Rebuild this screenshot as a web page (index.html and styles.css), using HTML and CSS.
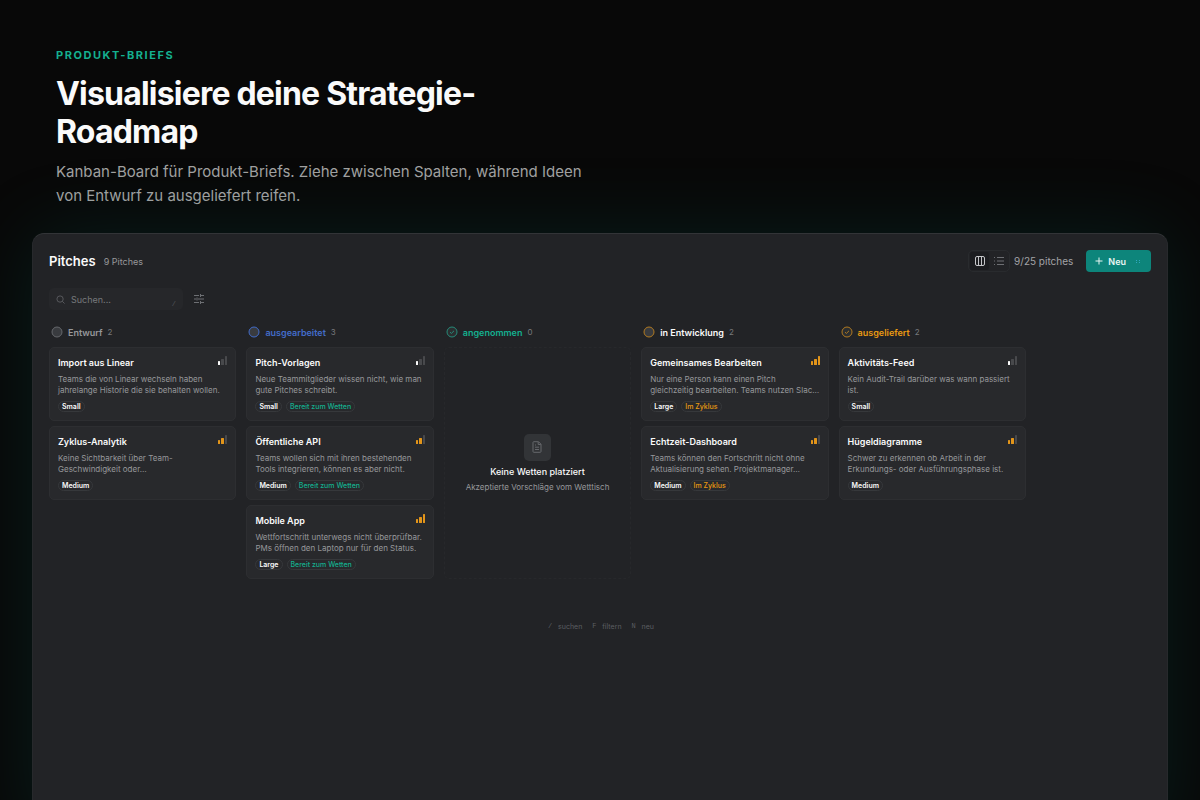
FILE: index.html
```
<!DOCTYPE html>
<html lang="de">
<head>
    <meta charset="UTF-8">
    <meta name="viewport" content="width=device-width, initial-scale=1.0">
    <title>Produkt-Briefs</title>
    <link rel="stylesheet" href="styles.css">
</head>
<body>
    <!-- Shared icons -->
    <svg class="sprite" aria-hidden="true">
        <symbol id="bars" viewBox="0 0 9 9">
            <rect class="bar-1" x="0" y="5" width="2" height="4" rx="0.5"/>
            <rect class="bar-2" x="3" y="3" width="3" height="6" rx="0.5"/>
            <rect class="bar-3" x="7" y="0" width="2" height="9" rx="0.5"/>
        </symbol>
        <symbol id="circle" viewBox="0 0 12 12">
            <circle cx="6" cy="6" r="5" fill="#393b3f" stroke="currentColor"/>
        </symbol>
        <symbol id="check" viewBox="0 0 12 12">
            <circle cx="6" cy="6" r="5" fill="#2b2e30" stroke="currentColor"/>
            <path d="M4 6.2l1.400 1.200L8 4.800" fill="none" stroke="currentColor"/>
        </symbol>
    </svg>

    <main class="page">
        <header class="intro">
            <p class="eyebrow">PRODUKT-BRIEFS</p>
            <h1>Visualisiere deine Strategie-Roadmap</h1>
            <p class="lead">Kanban-Board für Produkt-Briefs. Ziehe zwischen Spalten, während Ideen von Entwurf zu ausgeliefert reifen.</p>
        </header>

        <section class="panel">
            <div class="panel-header">
                <h2>Pitches</h2>
                <span class="total">9 Pitches</span>
                <div class="view-switch">
                    <button class="active" type="button" aria-label="Board">
                        <svg viewBox="0 0 10 10"><rect x="0.5" y="0.5" width="9" height="9" rx="1.5"/><path d="M3.5 0.5v9M6.5 0.5v9"/></svg>
                    </button>
                    <button type="button" aria-label="Liste">
                        <svg viewBox="0 0 10 10"><path d="M3 1.5h7M3 5h7M3 8.5h7M0 1.5h1M0 5h1M0 8.5h1"/></svg>
                    </button>
                </div>
                <span class="quota">9/25 pitches</span>
                <button class="new-button" type="button">
                    <svg viewBox="0 0 8 8"><path d="M4 0.5v7M0.5 4h7"/></svg>
                    Neu
                    <span class="key-dots"></span>
                </button>
            </div>

            <div class="toolbar">
                <label class="search">
                    <svg viewBox="0 0 10 10"><circle cx="4.5" cy="4.5" r="3.5"/><path d="M7 7l2.5 2.5"/></svg>
                    <input type="text" placeholder="Suchen..." aria-label="Suchen">
                    <kbd>/</kbd>
                </label>
                <button class="filter" type="button" aria-label="Filter">
                    <svg viewBox="0 0 10 10"><path d="M0 1.5h5M7 1.5h3M0 5h2M4 5h6M0 8.5h5M7 8.5h3M6.5 0v3M3 3.5v3M6.5 7v3"/></svg>
                </button>
            </div>

            <div class="board">
                <section class="column">
                    <h3 class="column-title draft"><svg><use href="#circle"/></svg>Entwurf <span>2</span></h3>
                    <article class="card">
                        <h4>Import aus Linear</h4>
                        <svg class="level low"><use href="#bars"/></svg>
                        <p>Teams die von Linear wechseln haben jahrelange Historie die sie behalten wollen.</p>
                        <div class="tags"><span class="tag">Small</span></div>
                    </article>
                    <article class="card">
                        <h4>Zyklus-Analytik</h4>
                        <svg class="level mid"><use href="#bars"/></svg>
                        <p>Keine Sichtbarkeit über Team-Geschwindigkeit oder…</p>
                        <div class="tags"><span class="tag">Medium</span></div>
                    </article>
                </section>

                <section class="column">
                    <h3 class="column-title shaped"><svg><use href="#circle"/></svg>ausgearbeitet <span>3</span></h3>
                    <article class="card">
                        <h4>Pitch-Vorlagen</h4>
                        <svg class="level low"><use href="#bars"/></svg>
                        <p>Neue Teammitglieder wissen nicht, wie man gute Pitches schreibt.</p>
                        <div class="tags"><span class="tag">Small</span><span class="tag ready">Bereit zum Wetten</span></div>
                    </article>
                    <article class="card">
                        <h4>Öffentliche API</h4>
                        <svg class="level mid"><use href="#bars"/></svg>
                        <p>Teams wollen sich mit ihren bestehenden Tools integrieren, können es aber nicht.</p>
                        <div class="tags"><span class="tag">Medium</span><span class="tag ready">Bereit zum Wetten</span></div>
                    </article>
                    <article class="card">
                        <h4>Mobile App</h4>
                        <svg class="level high"><use href="#bars"/></svg>
                        <p>Wettfortschritt unterwegs nicht überprüfbar. PMs öffnen den Laptop nur für den Status.</p>
                        <div class="tags"><span class="tag">Large</span><span class="tag ready">Bereit zum Wetten</span></div>
                    </article>
                </section>

                <section class="column">
                    <h3 class="column-title accepted"><svg><use href="#check"/></svg>angenommen <span>0</span></h3>
                    <div class="empty">
                        <div class="empty-icon">
                            <svg viewBox="0 0 12 12"><path d="M2 1.5a.8.8 0 0 1 .8-.8H7.500L10 3.200v7.300a.8.8 0 0 1-.8.8H2.800a.8.8 0 0 1-.8-.8zM7.200 .9v2.600h2.600M4 4h1M4 6.200h4M4 8.500h4"/></svg>
                        </div>
                        <h4>Keine Wetten platziert</h4>
                        <p>Akzeptierte Vorschläge vom Wetttisch</p>
                    </div>
                </section>

                <section class="column">
                    <h3 class="column-title building"><svg><use href="#circle"/></svg>in Entwicklung <span>2</span></h3>
                    <article class="card">
                        <h4>Gemeinsames Bearbeiten</h4>
                        <svg class="level high"><use href="#bars"/></svg>
                        <p>Nur eine Person kann einen Pitch gleichzeitig bearbeiten. Teams nutzen Slac…</p>
                        <div class="tags"><span class="tag">Large</span><span class="tag cycle">Im Zyklus</span></div>
                    </article>
                    <article class="card">
                        <h4>Echtzeit-Dashboard</h4>
                        <svg class="level mid"><use href="#bars"/></svg>
                        <p>Teams können den Fortschritt nicht ohne Aktualisierung sehen. Projektmanager…</p>
                        <div class="tags"><span class="tag">Medium</span><span class="tag cycle">Im Zyklus</span></div>
                    </article>
                </section>

                <section class="column">
                    <h3 class="column-title shipped"><svg><use href="#check"/></svg>ausgeliefert <span>2</span></h3>
                    <article class="card">
                        <h4>Aktivitäts-Feed</h4>
                        <svg class="level low"><use href="#bars"/></svg>
                        <p>Kein Audit-Trail darüber was wann passiert ist.</p>
                        <div class="tags"><span class="tag">Small</span></div>
                    </article>
                    <article class="card">
                        <h4>Hügeldiagramme</h4>
                        <svg class="level mid"><use href="#bars"/></svg>
                        <p>Schwer zu erkennen ob Arbeit in der Erkundungs- oder Ausführungsphase ist.</p>
                        <div class="tags"><span class="tag">Medium</span></div>
                    </article>
                </section>
            </div>

            <footer class="shortcuts">
                <span><kbd>/</kbd>suchen</span>
                <span><kbd>F</kbd>filtern</span>
                <span><kbd>N</kbd>neu</span>
            </footer>
        </section>
    </main>
</body>
</html>
```
FILE: styles.css
```
* {
    box-sizing: border-box;
}
body {
    margin: 0;
    background-color: #080808;
    color: #fafafa;
    font-family: Inter, "Liberation Sans", sans-serif;
}
h1, h2, h3, h4, p {
    margin: 0;
}
button, input {
    font-family: inherit;
    color: inherit;
    border: none;
    padding: 0;
}
svg {
    display: block;
    flex: none;
    stroke: currentColor;
    fill: none;
}
.sprite {
    position: absolute;
    width: 0;
    height: 0;
}
.page {
    display: flex;
    flex-direction: column;
    min-height: 100vh;
    padding: 48px 32px 0;
    overflow: hidden;
}

/* Intro text */
.intro {
    max-width: 584px;
    padding: 0 24px;
    margin-bottom: 25px;
}
.eyebrow {
    color: #14b08f;
    font-size: 11px;
    font-weight: 700;
    line-height: 14px;
    letter-spacing: 0.14em;
    margin-bottom: 13px;
}
h1 {
    font-size: 32px;
    font-weight: 700;
    line-height: 38px;
    letter-spacing: -0.025em;
    margin-bottom: 9px;
}
.lead {
    color: #a1a1a1;
    font-size: 15px;
    line-height: 24px;
}

/* App window, runs out of the bottom of the page */
.panel {
    flex: 1;
    margin-bottom: -40px;
    padding: 16px;
    background-color: #222326;
    border: 1px solid #27292c;
    border-top-color: #323437;
    border-radius: 12px;
    box-shadow: 0 0 80px rgba(13, 148, 136, 0.15);
}
.panel-header {
    display: flex;
    align-items: center;
    height: 22px;
    margin-bottom: 16px;
}
h2 {
    font-size: 13px;
    font-weight: 600;
    margin-right: 8px;
}
.total {
    color: #97989b;
    font-size: 9px;
}
.view-switch {
    display: flex;
    margin-left: auto;
    margin-right: 4px;
    padding: 1px;
    border: 1px solid #292b2e;
    border-radius: 5px;
}
.view-switch button {
    display: flex;
    align-items: center;
    justify-content: center;
    width: 19px;
    height: 18px;
    border-radius: 3px;
    background: none;
    color: #6d6f73;
}
.view-switch .active {
    background-color: #1c1d20;
    color: #c4c5c8;
}
.view-switch svg {
    width: 10px;
    height: 10px;
}
.quota {
    color: #a3a4a7;
    font-size: 10px;
    margin-right: 13px;
}
.new-button {
    display: flex;
    align-items: center;
    gap: 5px;
    height: 22px;
    padding: 0 10px 0 9px;
    border-radius: 4px;
    background-color: #0d857b;
    color: #e8f5f3;
    font-size: 9px;
    font-weight: 600;
}
.new-button svg {
    width: 8px;
    height: 8px;
}
.key-dots {
    width: 4px;
    height: 3px;
    margin: 0 1px 0 5px;
    border: 1px dotted #2fa8c0;
    border-width: 0 1px;
}

/* Search and filter */
.toolbar {
    display: flex;
    align-items: center;
    gap: 11px;
    margin-bottom: 16px;
}
.search {
    display: flex;
    align-items: center;
    gap: 6px;
    width: 134px;
    height: 22px;
    padding: 0 7px;
    border-radius: 5px;
    background-color: #26272a;
    color: #5c5e62;
}
.search svg {
    width: 9px;
    height: 9px;
}
.search input {
    flex: 1;
    min-width: 0;
    background: none;
    outline: none;
    font-size: 9px;
}
.search input::placeholder {
    color: #77797c;
}
.search kbd {
    align-self: flex-end;
    font-size: 7px;
    line-height: 12px;
    color: #55575a;
}
kbd {
    font-family: "Liberation Mono", monospace;
}
.filter {
    background: none;
    color: #6d6f73;
}
.filter svg {
    width: 10px;
    height: 10px;
}

/* Board */
.board {
    display: grid;
    grid-template-columns: repeat(5, minmax(0, 1fr));
    gap: 10px;
    max-width: 977px;
}
.column {
    display: flex;
    flex-direction: column;
    gap: 5px;
}
.column-title {
    display: flex;
    align-items: center;
    gap: 5px;
    height: 12px;
    margin-bottom: 4px;
    padding-left: 2px;
    font-size: 9px;
    font-weight: 600;
}
.column-title svg {
    width: 12px;
    height: 12px;
}
.column-title span {
    color: #77797c;
    font-size: 8px;
    font-weight: 400;
}
.draft {
    color: #97989b;
}
.draft svg {
    color: #66686c;
}
.shaped {
    color: #426cc9;
}
.accepted {
    color: #14b08f;
}
.accepted svg {
    color: #268b79;
}
.building svg,
.shipped svg {
    color: #b27a21;
}
.shipped {
    color: #e99a12;
}
.card {
    display: grid;
    grid-template-columns: 1fr 9px;
    padding: 8px;
    border: 1px solid #2d2e31;
    border-radius: 5px;
    background-color: #28292c;
}
h4 {
    font-size: 9px;
    font-weight: 600;
    line-height: 13px;
}
.card p {
    grid-column: 1 / -1;
    height: 22px;
    margin: 5px 0;
    color: #97989b;
    font-size: 8px;
    line-height: 11px;
}
.level {
    width: 9px;
    height: 9px;
    stroke: none;
    --bar-1: #e3951a;
    --bar-2: #e3951a;
    --bar-3: #48494c;
}
.low {
    --bar-1: #fafafa;
    --bar-2: #48494c;
}
.high {
    --bar-3: #e3951a;
}
.bar-1 {
    fill: var(--bar-1);
}
.bar-2 {
    fill: var(--bar-2);
}
.bar-3 {
    fill: var(--bar-3);
}
.tags {
    display: flex;
    grid-column: 1 / -1;
    gap: 4px;
}
.tag {
    height: 11px;
    padding: 0 3px;
    border: 1px solid #36383b;
    border-radius: 6px;
    font-size: 7px;
    font-weight: 600;
    line-height: 9px;
}
.ready {
    color: #14b08f;
    font-weight: 500;
}
.cycle {
    color: #e99a12;
    font-weight: 500;
}

/* Empty column */
.empty {
    display: flex;
    flex: 1;
    flex-direction: column;
    align-items: center;
    justify-content: center;
    border: 1px dashed #27282b;
    border-radius: 5px;
}
.empty-icon {
    display: flex;
    align-items: center;
    justify-content: center;
    width: 27px;
    height: 27px;
    margin-bottom: 4px;
    border-radius: 5px;
    background-color: #323437;
    color: #66686c;
}
.empty-icon svg {
    width: 12px;
    height: 12px;
}
.empty h4 {
    font-weight: 500;
}
.empty p {
    margin-top: 4px;
    color: #97989b;
    font-size: 8px;
    line-height: 11px;
}

/* Keyboard hints */
.shortcuts {
    display: flex;
    justify-content: center;
    gap: 8px;
    margin-top: 42px;
    color: #5c5e62;
    font-size: 7px;
    line-height: 11px;
}
.shortcuts span {
    display: flex;
    gap: 4px;
}
.shortcuts kbd {
    width: 8px;
    text-align: center;
    font-size: 7px;
}
```
